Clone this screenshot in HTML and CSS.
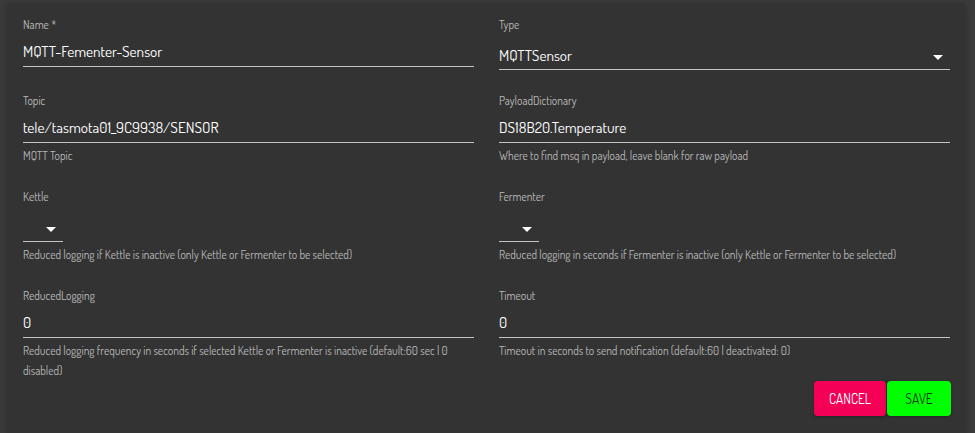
FILE: index.html
```html
<!DOCTYPE html>
<html lang="en">
<head>
<meta charset="utf-8">
<title>Sensor</title>
<link rel="stylesheet" href="styles.css">
</head>
<body>
<div class="dialog">
  <div class="form-grid">
    <div class="field">
      <label class="label">Name *</label>
      <div class="input">MQTT-Fementer-Sensor</div>
    </div>
    <div class="field">
      <label class="label">Type</label>
      <div class="select">
        <span class="value">MQTTSensor</span>
        <svg class="arrow" viewBox="0 0 10 5" width="10" height="5"><path d="M0 0l5 5 5-5z"/></svg>
      </div>
    </div>

    <div class="field">
      <label class="label">Topic</label>
      <div class="input">tele/tasmota01_9C9938/SENSOR</div>
      <p class="helper">MQTT Topic</p>
    </div>
    <div class="field">
      <label class="label">PayloadDictionary</label>
      <div class="input">DS18B20.Temperature</div>
      <p class="helper">Where to find msq in payload, leave blank for raw payload</p>
    </div>

    <div class="field">
      <label class="label">Kettle</label>
      <div class="select compact">
        <span class="value">&nbsp;</span>
        <svg class="arrow" viewBox="0 0 10 5" width="10" height="5"><path d="M0 0l5 5 5-5z"/></svg>
      </div>
      <p class="helper">Reduced logging if Kettle is inactive (only Kettle or Fermenter to be selected)</p>
    </div>
    <div class="field">
      <label class="label">Fermenter</label>
      <div class="select compact">
        <span class="value">&nbsp;</span>
        <svg class="arrow" viewBox="0 0 10 5" width="10" height="5"><path d="M0 0l5 5 5-5z"/></svg>
      </div>
      <p class="helper">Reduced logging in seconds if Fermenter is inactive (only Kettle or Fermenter to be selected)</p>
    </div>

    <div class="field">
      <label class="label">ReducedLogging</label>
      <div class="input">0</div>
      <p class="helper">Reduced logging frequency in seconds if selected Kettle or Fermenter is inactive (default:60 sec | 0 disabled)</p>
    </div>
    <div class="field">
      <label class="label">Timeout</label>
      <div class="input">0</div>
      <p class="helper">Timeout in seconds to send notification (default:60 | deactivated: 0)</p>
    </div>
  </div>
  <div class="actions">
    <button class="btn btn-cancel">Cancel</button>
    <button class="btn btn-save">Save</button>
  </div>
</div>
</body>
</html>
```
FILE: styles.css
```css
html, body {
  margin: 0;
  padding: 0;
}
body {
  background: #3b3b3b;
  font-family: Dosis, "Roboto Condensed", sans-serif;
  color: #fff;
  overflow: hidden;
}
.dialog {
  margin: 3px 9px 0 7px;
  height: 430px;
  background: #333333;
  border-radius: 4px 4px 0 0;
  box-shadow: 0 2px 6px rgba(0,0,0,0.25);
  padding: 14px 16px 0;
  box-sizing: border-box;
}
.form-grid {
  display: grid;
  grid-template-columns: 1fr 1fr;
  column-gap: 25px;
  row-gap: 23px;
  align-items: start;
}
.field {
  display: flex;
  flex-direction: column;
  min-width: 0;
}
.label {
  font-size: 11.5px;
  line-height: 16px;
  color: #bababa;
}
.input {
  font-size: 15.3px;
  line-height: 20px;
  padding: 8px 0 5px;
  border-bottom: 1px solid #c4c4c4;
  color: #fff;
  white-space: nowrap;
}
.select {
  position: relative;
  font-size: 15.3px;
  line-height: 20px;
  padding: 12px 0 4px;
  border-bottom: 1px solid #c4c4c4;
  color: #fff;
}
.select.compact {
  width: 40px;
}
.arrow {
  position: absolute;
  right: 7px;
  top: 22px;
  fill: #fff;
}
.helper {
  margin: 3px 0 0;
  font-size: 11.5px;
  line-height: 20px;
  color: #b8b8b8;
}
.actions {
  display: flex;
  justify-content: flex-end;
  gap: 1px;
  margin-right: -1px;
}
.btn {
  font-family: Dosis, "Roboto Condensed", sans-serif;
  font-size: 13.4px;
  text-transform: uppercase;
  height: 35px;
  min-width: 64px;
  padding: 0 15px;
  border: none;
  border-radius: 4px;
  box-shadow: 0 1px 3px rgba(0,0,0,0.3);
  cursor: pointer;
}
.btn-cancel {
  background: #f50057;
  color: #fff;
}
.btn-save {
  background: #00ff00;
  color: rgba(0,0,0,0.8);
}
```
